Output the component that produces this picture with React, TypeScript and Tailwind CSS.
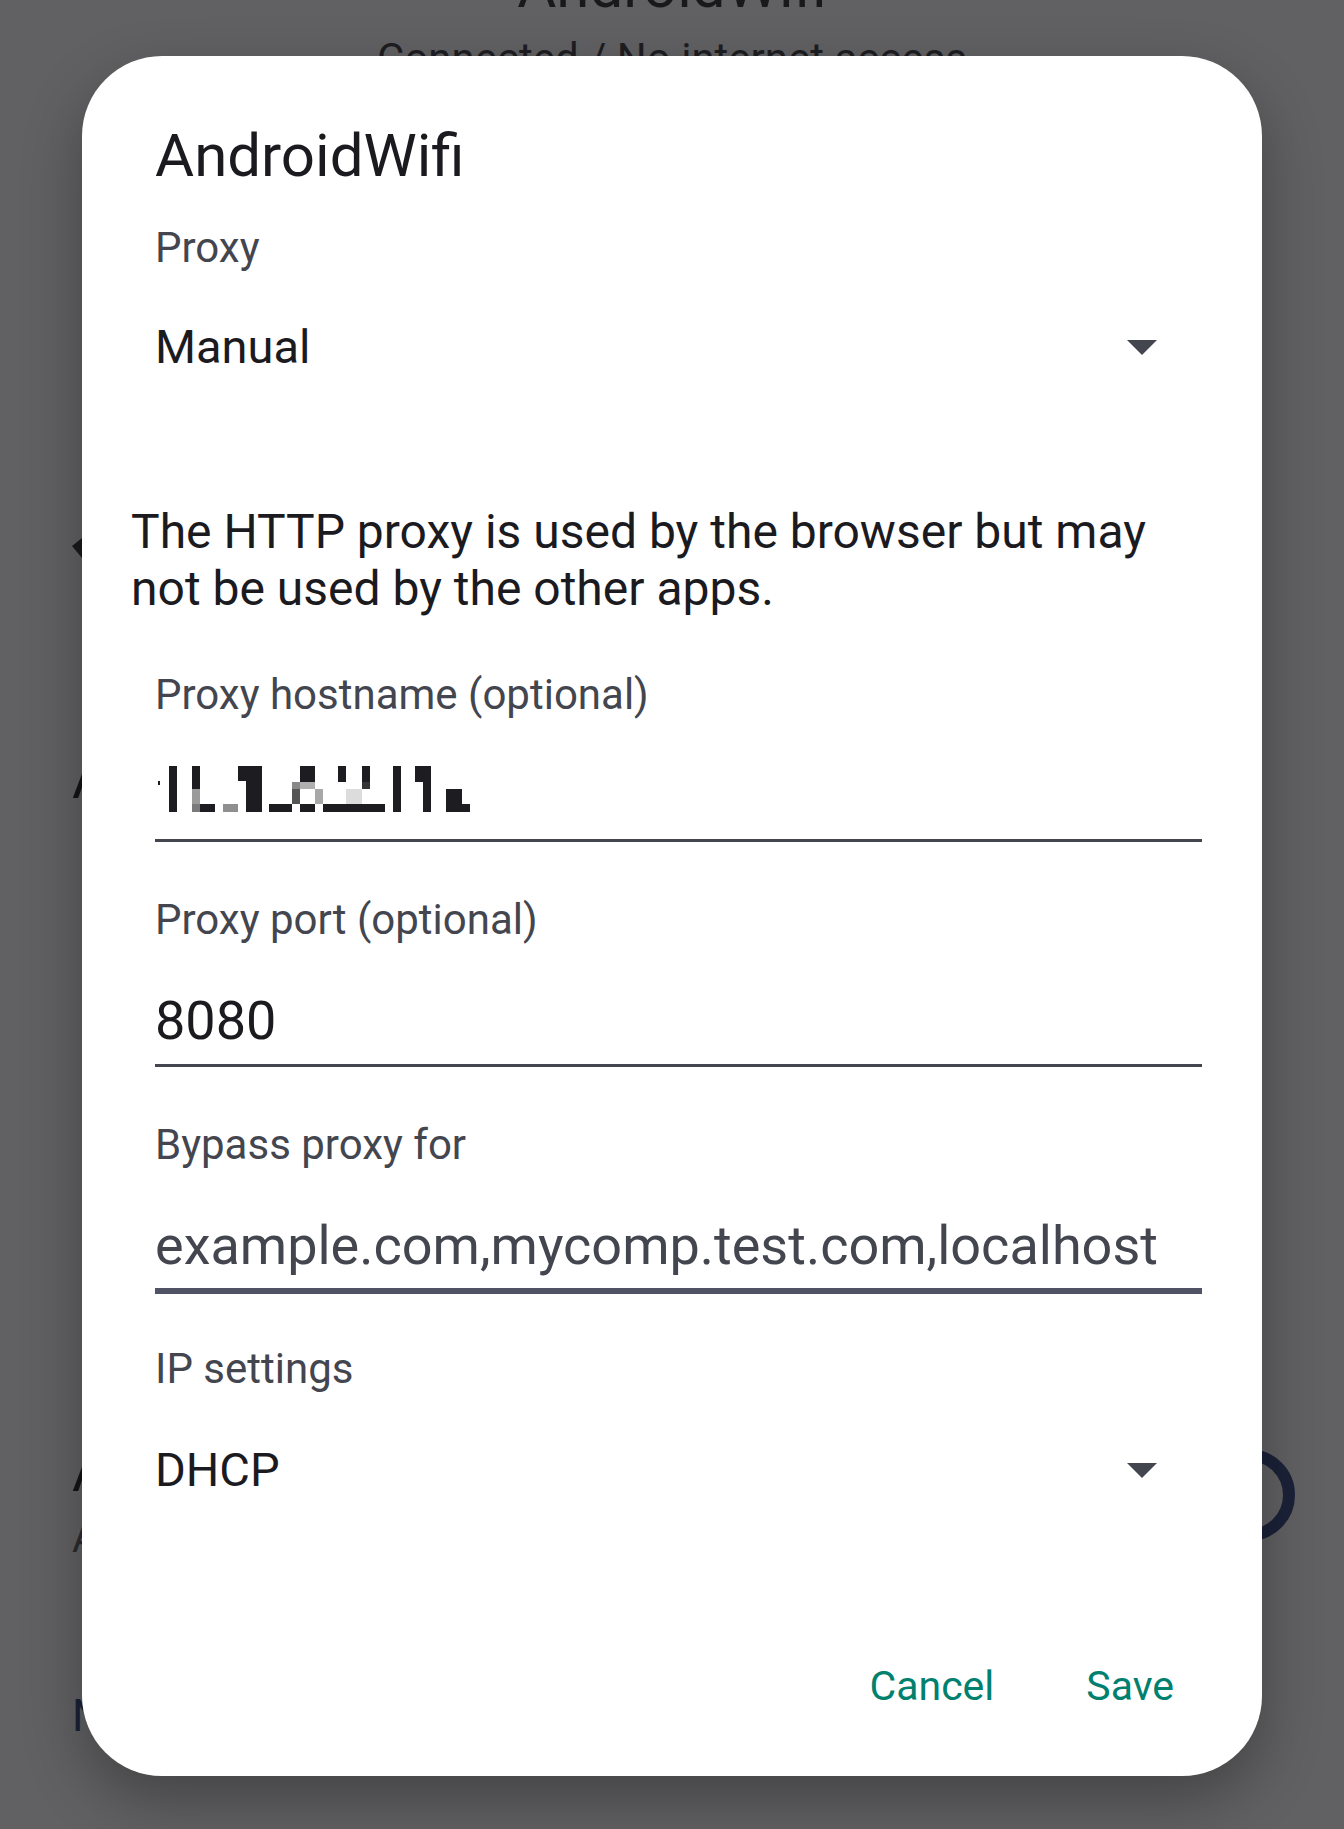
import React from 'react';

// redacted hostname value, drawn as mosaic blocks
const mosaic: [number, number, number, number, string][] = [
  [0, 15, 2, 4, '#1d1d21'],
  [11, 0, 8, 46, '#1d1d21'],
  [34, 0, 8, 23, '#1d1d21'],
  [34, 23, 8, 15, '#9a9a9a'],
  [34, 38, 8, 8, '#7a7a7a'],
  [42, 38, 15, 8, '#1d1d21'],
  [65, 38, 15, 8, '#8f8f8f'],
  [80, 0, 24, 15, '#1d1d21'],
  [88, 0, 16, 46, '#1d1d21'],
  [111, 38, 23, 8, '#1d1d21'],
  [134, 16, 8, 7, '#888888'],
  [134, 23, 8, 15, '#555555'],
  [142, 0, 15, 16, '#1d1d21'],
  [142, 16, 15, 7, '#b0b0b0'],
  [142, 38, 15, 8, '#1d1d21'],
  [157, 23, 8, 15, '#a8a8a8'],
  [165, 38, 62, 8, '#1d1d21'],
  [180, 0, 8, 16, '#1d1d21'],
  [188, 23, 16, 15, '#dcdcdc'],
  [204, 0, 8, 16, '#1d1d21'],
  [204, 16, 8, 7, '#333333'],
  [235, 0, 8, 46, '#1d1d21'],
  [257, 0, 16, 16, '#1d1d21'],
  [265, 0, 8, 46, '#1d1d21'],
  [288, 23, 16, 23, '#1d1d21'],
  [304, 38, 8, 8, '#1d1d21'],
];

function Caret() {
  return (
    <svg width="30" height="15" viewBox="0 0 30 15" className="shrink-0">
      <path d="M0 0 L30 0 L15 15 Z" fill="#44464f" />
    </svg>
  );
}

function Label({ children, mt = 'mt-[48px]' }: { children: React.ReactNode; mt?: string }) {
  return <div className={`${mt} h-[60px] text-[42px] leading-[60px] text-[#44464f]`}>{children}</div>;
}

export default function App() {
  return (
    <div className="relative w-[1344px] h-[1829px] overflow-hidden bg-[#616163] font-['Roboto',sans-serif]">
      {/* ── Page behind the dialog ─────────────── */}
      <div className="flex flex-col">
        <div className="mt-[-43px] h-[60px] text-center text-[60px] leading-[60px] text-[#19191c]">AndroidWifi</div>
        <div className="mt-[21px] h-[42px] text-center text-[42px] leading-[42px] text-[#1e1e22]">Connected / No internet access</div>

        <div className="flex justify-between">
          <div className="flex flex-col pl-[72px]">
            <svg width="20" height="20" viewBox="0 0 20 20" className="mt-[458px]">
              <path d="M0 8 L10 0 L10 20 Z" fill="#1a1a1e" />
            </svg>
            <div className="mt-[193px] h-[56px] text-[56px] leading-[56px] text-[#141416]">A</div>
            <div className="mt-[637px] h-[56px] text-[56px] leading-[56px] text-[#141416]">A</div>
            <div className="mt-[19px] h-[40px] text-[40px] leading-[40px] text-[#2c2c30]">A</div>
            <div className="mt-[135px] h-[44px] text-[44px] leading-[44px] text-[#1b2238]">N</div>
          </div>
          <div className="pr-[49px]">
            <div className="mt-[1369px] h-[92px] w-[92px] rounded-full border-[12px] border-[#1b2238]" />
          </div>
        </div>
      </div>

      {/* ── Proxy dialog ───────────────────────── */}
      <div className="absolute left-[82px] top-[56px] flex h-[1720px] w-[1180px] flex-col rounded-[80px] bg-white pt-[60px] shadow-[0_24px_60px_rgba(0,0,0,0.3)]">
        <div className="h-[80px] pl-[73px] text-[60px] leading-[80px] text-[#1b1b1f]">AndroidWifi</div>

        <div className="pl-[73px]">
          <Label mt="mt-[22px]">Proxy</Label>
        </div>
        <div className="mt-[39px] flex h-[60px] items-center justify-between pl-[73px] pr-[105px]">
          <span className="text-[47px] leading-[60px] text-[#1b1b1f]">Manual</span>
          <Caret />
        </div>

        <p className="mt-[126px] w-[1100px] pl-[49px] text-[48px] leading-[57px] text-[#1b1b1f]">
          The HTTP proxy is used by the browser but may not be used by the other apps.
        </p>

        <div className="flex flex-col pl-[73px] pr-[60px]">
          <Label>Proxy hostname (optional)</Label>
          <div className="mt-[36px] h-[70px] pl-[3px] pt-[5px]">
            <svg width="312" height="46" viewBox="0 0 312 46">
              {mosaic.map(([x, y, w, h, c], i) => (
                <rect key={i} x={x} y={y} width={w} height={h} fill={c} />
              ))}
            </svg>
          </div>
          <div className="mt-[8px] h-[3px] bg-[#44464f]" />

          <Label>Proxy port (optional)</Label>
          <div className="mt-[36px] h-[70px] text-[54px] leading-[70px] text-[#1b1b1f]">8080</div>
          <div className="mt-[8px] h-[3px] bg-[#44464f]" />

          <Label>Bypass proxy for</Label>
          <div className="mt-[36px] h-[70px] text-[54px] leading-[70px] text-[#44464f]">
            example.com,mycomp.test.com,localhost
          </div>
          <div className="mt-[7px] h-[6px] bg-[#4f5365]" />

          <Label mt="mt-[45px]">IP settings</Label>
        </div>
        <div className="mt-[41px] flex h-[60px] items-center justify-between pl-[73px] pr-[105px]">
          <span className="text-[47px] leading-[60px] text-[#1b1b1f]">DHCP</span>
          <Caret />
        </div>

        <div className="mt-auto mb-[60px] flex h-[60px] items-center justify-end gap-[92px] pr-[88px] text-[41px] leading-[60px] text-[#00806e]">
          <button>Cancel</button>
          <button>Save</button>
        </div>
      </div>
    </div>
  );
}
